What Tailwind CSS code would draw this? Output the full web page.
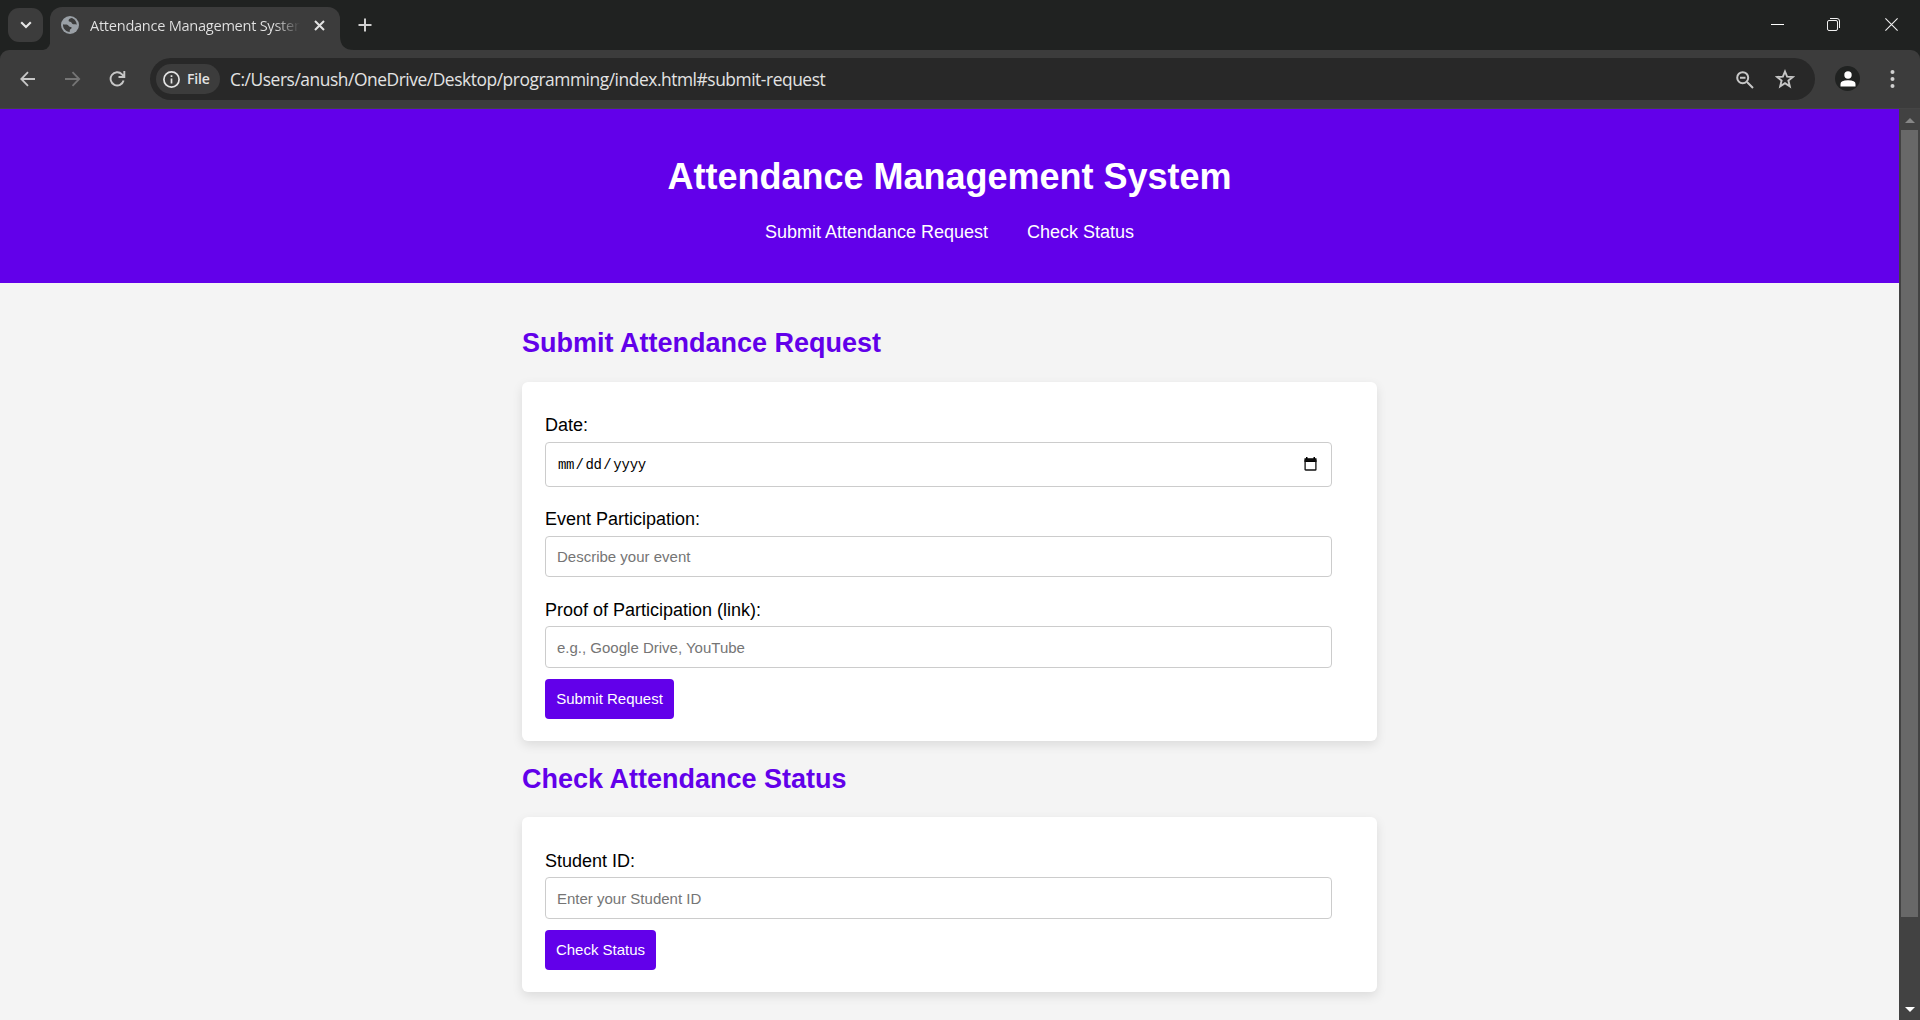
<!DOCTYPE html>
<html lang="en">
<head>
<meta charset="utf-8">
<title>Attendance Management System</title>
<script src="https://cdn.jsdelivr.net/npm/@tailwindcss/browser@4"></script>
</head>
<body class="w-[1920px] h-[1020px] overflow-hidden flex flex-col bg-[#202221] font-['Liberation_Sans',Arial,sans-serif] text-black">
  <!-- Tab strip -->
  <div class="h-[50px] flex shrink-0 font-['Open_Sans',sans-serif]">
    <div class="mt-2 ml-2 w-[35px] h-[34px] rounded-[11px] bg-[#3c3c3c] flex items-center justify-center">
      <svg width="12" height="8" viewBox="0 0 12 8" fill="none" stroke="#e6e6e6" stroke-width="2.1"><path d="M1.2 1.2 6 6l4.800-4.800"/></svg>
    </div>
    <svg class="self-end -mr-px" width="8" height="13" viewBox="0 0 8 13"><path d="M8 0Q8 12 0 13H8Z" fill="#3c3c3c"/></svg>
    <div class="mt-[7px] w-[290px] h-[43px] rounded-t-[12px] bg-[#3c3c3c] flex items-start pl-[11px]">
      <svg class="mt-[9px]" width="18" height="18" viewBox="0 0 18 18"><circle cx="9" cy="9" r="9" fill="#9aa0a6"/><path d="M10.500 1.900C8.500 2.500 7.600 3.300 7.600 4.600c0 1.300 1 1.100 2.300 1.500 1 .4.7 1.500 1.700 1.900 1.400.6 2.500-.2 4.100.8C15.800 5.500 13.500 2.600 10.500 1.900ZM2 8.300c1.300.5 2.800 0 4.300.4 1.400.3 1.100 1.700 2.400 2 1 .3 1.900.1 1.900 1.100 0 1.200-1.300 1.200-1.700 2.200-.2.6-.2 1.200-.2 1.900C4.900 15.700 1.700 12.600 2 8.300Z" fill="#3c3c3c"/></svg>
      <div class="mt-2 ml-[11px] w-[210px] overflow-hidden whitespace-nowrap text-[14.6px] tracking-[-0.28px] leading-5 bg-linear-to-r from-[#e3e3e3] from-88% to-transparent to-100% bg-clip-text text-transparent">Attendance Management System</div>
      <svg class="ml-[14px] mt-[13px]" width="11" height="11" viewBox="0 0 11 11" stroke="#e3e3e3" stroke-width="2"><path d="M1 1l9 9M10 1 1 10"/></svg>
    </div>
    <svg class="self-end" width="14" height="14" viewBox="0 0 14 14"><path d="M0 0Q0 14 14 14H0Z" fill="#3c3c3c"/></svg>
    <svg class="mt-[18px] ml-[4px]" width="14" height="14" viewBox="0 0 14 14" stroke="#d0d0d0" stroke-width="2"><path d="M7 .5v13M.5 7h13"/></svg>
    <div class="ml-auto flex">
      <svg class="mt-[24px]" width="13" height="1"><path d="M0 0h13v1H0z" fill="#fff"/></svg>
      <svg class="mt-[18px] ml-[43px]" width="13" height="13" viewBox="0 0 13 13" fill="none" stroke="#f0f0f0"><rect x=".5" y="2.500" width="10" height="10" rx="1.500"/><path d="M3 .5h7Q12.500.5 12.500 3v7"/></svg>
      <svg class="mt-[18px] ml-[45px] mr-[22px]" width="13" height="13" viewBox="0 0 13 13" stroke="#f0f0f0" stroke-width="1.100"><path d="M.4.4l12.200 12.200M12.600.4.4 12.600"/></svg>
    </div>
  </div>

  <!-- Toolbar -->
  <div class="h-[59px] shrink-0 rounded-t-[9px] bg-[#3c3c3c] flex items-start border-b border-[#454545] font-['Open_Sans',sans-serif]">
    <svg class="mt-[21px] ml-5" width="16" height="16" viewBox="0 0 16 16" fill="none" stroke="#c7c7c7" stroke-width="1.800"><path d="M15 8H1.500M8 1.200 1.300 8 8 14.800"/></svg>
    <svg class="mt-[21px] ml-[29px]" width="16" height="16" viewBox="0 0 16 16" fill="none" stroke="#757575" stroke-width="1.800"><path d="M0 8h14M7.500 1.200 14.200 8 7.500 14.800"/></svg>
    <svg class="mt-[21px] ml-[28px]" width="17" height="16" viewBox="0 0 17 16" fill="none" stroke="#c7c7c7" stroke-width="1.900"><path d="M14.600 9.500A6.600 6.600 0 1 1 13 3.300L15 5.500M15.300 0v6H9.500"/></svg>
    <div class="mt-2 ml-[24px] w-[1665px] h-[42px] rounded-full bg-[#282828] flex items-center pl-[6px]">
      <div class="w-[64px] h-[30px] rounded-full bg-[#3c3c3c] flex items-center pl-[7px]">
        <svg width="17" height="17" viewBox="0 0 17 17" fill="none" stroke="#e3e3e3" stroke-width="1.700"><circle cx="8.500" cy="8.500" r="7.600"/><path d="M8.500 7.500v5M8.500 4.300v1.800"/></svg>
        <span class="ml-[7px] -mt-px text-[14px] tracking-[-0.2px] font-semibold text-[#e3e3e3]">File</span>
      </div>
      <div class="ml-[10px] w-[1180px] whitespace-nowrap text-[17.4px] tracking-[-0.455px] text-[#e3e3e3]">C:/Users/anush/OneDrive/Desktop/programming/index.html#submit-request</div>
      <svg class="ml-auto mt-px" width="18" height="18" viewBox="0 0 18 18" fill="none" stroke="#c7c7c7" stroke-width="2"><circle cx="6.700" cy="6.700" r="5.500"/><path d="M11 11l6 6M4 6.700h5.500" /></svg>
      <svg class="ml-[21px] mr-[20px]" width="20" height="20" viewBox="0 0 20 20" fill="none" stroke="#c7c7c7" stroke-width="1.900"><path d="m10 2.500 2.100 5.100 5.700.4-4.400 3.600 1.400 5.700-4.800-3.100-4.800 3.100 1.400-5.700L2.200 8l5.700-.4Z"/></svg>
    </div>
    <div class="mt-4 ml-5 w-[25px] h-[25px] rounded-full bg-[#202221] flex justify-center items-center">
      <svg width="16" height="16" viewBox="0 0 16 16" fill="#fff"><circle cx="8" cy="4" r="3.700"/><path d="M.5 15.500V13Q.5 9.300 8 9.300T15.500 13v2.500Z"/></svg>
    </div>
    <svg class="mt-5 ml-[30px]" width="5" height="18" viewBox="0 0 5 18" fill="#d0d0d0"><circle cx="2.500" cy="2" r="2"/><circle cx="2.500" cy="9" r="2"/><circle cx="2.500" cy="16" r="2"/></svg>
  </div>

  <!-- Page -->
  <div class="flex grow">
    <div class="w-[1899px] bg-[#f4f4f4]">
      <header class="h-[174px] bg-[#6200ea] text-white pt-[47px] flex flex-col items-center">
        <h1 class="text-[36px] font-bold leading-[41px] whitespace-nowrap">Attendance Management System</h1>
        <nav class="mt-[25px] flex gap-[39px] text-[18px] leading-[21px]"><a>Submit Attendance Request</a><a>Check Status</a></nav>
      </header>
      <main class="w-[855px] ml-[522px] pt-[45px]">
        <h2 class="text-[27px] leading-[31px] font-bold text-[#6200ea]">Submit Attendance Request</h2>
        <section class="mt-[23px] h-[359px] bg-white rounded-[6px] shadow-[0_4px_11px_rgba(0,0,0,0.1)] pl-[23px] pt-[33px] flex flex-col items-start text-[18px] leading-[21px]">
          <label>Date:</label>
          <div class="mt-[6px] w-[787px] h-[45px] border border-[#ccc] rounded-[4px] flex items-center justify-between pl-[12px] pr-[14px] font-['Liberation_Mono',monospace] text-[14px]"><span class="flex pt-[2px]"><span class="tracking-[-0.400px]">mm</span><span class="mx-[1.500px]">/</span><span class="tracking-[-0.200px]">dd</span><span class="mx-[1.500px]">/</span><span class="tracking-[-0.200px]">yyyy</span></span>
            <svg class="-mt-px" width="13" height="14" viewBox="0 0 13 14"><path d="M2 0h1.500v1.500H2zM9.500 0H11v1.500H9.500zM.5 1.300h12V5H.5z"/><rect x="1.100" y="3" width="10.800" height="10" rx=".6" fill="none" stroke="#111" stroke-width="1.300"/></svg>
          </div>
          <label class="mt-[22px]">Event Participation:</label>
          <div class="mt-[6px] w-[787px] h-[41px] border border-[#ccc] rounded-[4px] flex items-center pl-[11px] text-[15px] text-[#757575]">Describe your event</div>
          <label class="mt-[23px]">Proof of Participation (link):</label>
          <div class="mt-[5px] w-[787px] h-[42px] border border-[#ccc] rounded-[4px] flex items-center pl-[11px] text-[15px] text-[#757575]">e.g., Google Drive, YouTube</div>
          <button class="mt-[11px] w-[129px] h-[40px] rounded-[4px] bg-[#6200ea] text-white text-[15px] pb-[2px]">Submit Request</button>
        </section>
        <h2 class="mt-[23px] text-[27px] leading-[31px] font-bold text-[#6200ea]">Check Attendance Status</h2>
        <section class="mt-[22px] h-[175px] bg-white rounded-[6px] shadow-[0_4px_11px_rgba(0,0,0,0.1)] pl-[23px] pt-[34px] flex flex-col items-start text-[18px] leading-[21px]">
          <label>Student ID:</label>
          <div class="mt-[5px] w-[787px] h-[42px] border border-[#ccc] rounded-[4px] flex items-center pl-[11px] text-[15px] text-[#757575]">Enter your Student ID</div>
          <button class="mt-[11px] w-[111px] h-[40px] rounded-[4px] bg-[#6200ea] text-white text-[15px] pb-[2px]">Check Status</button>
        </section>
      </main>
    </div>
    <!-- Scrollbar -->
    <div class="w-[21px] bg-[#424242] flex flex-col items-center">
      <svg class="mt-[9px]" width="10" height="5"><path d="M5 0l5 5H0z" fill="#868686"/></svg>
      <div class="mt-[7px] w-[17px] h-[787px] bg-[#686868]"></div>
      <svg class="mt-[90px]" width="10" height="5"><path d="M5 5 0 0h10z" fill="#fff"/></svg>
    </div>
  </div>
</body>
</html>
